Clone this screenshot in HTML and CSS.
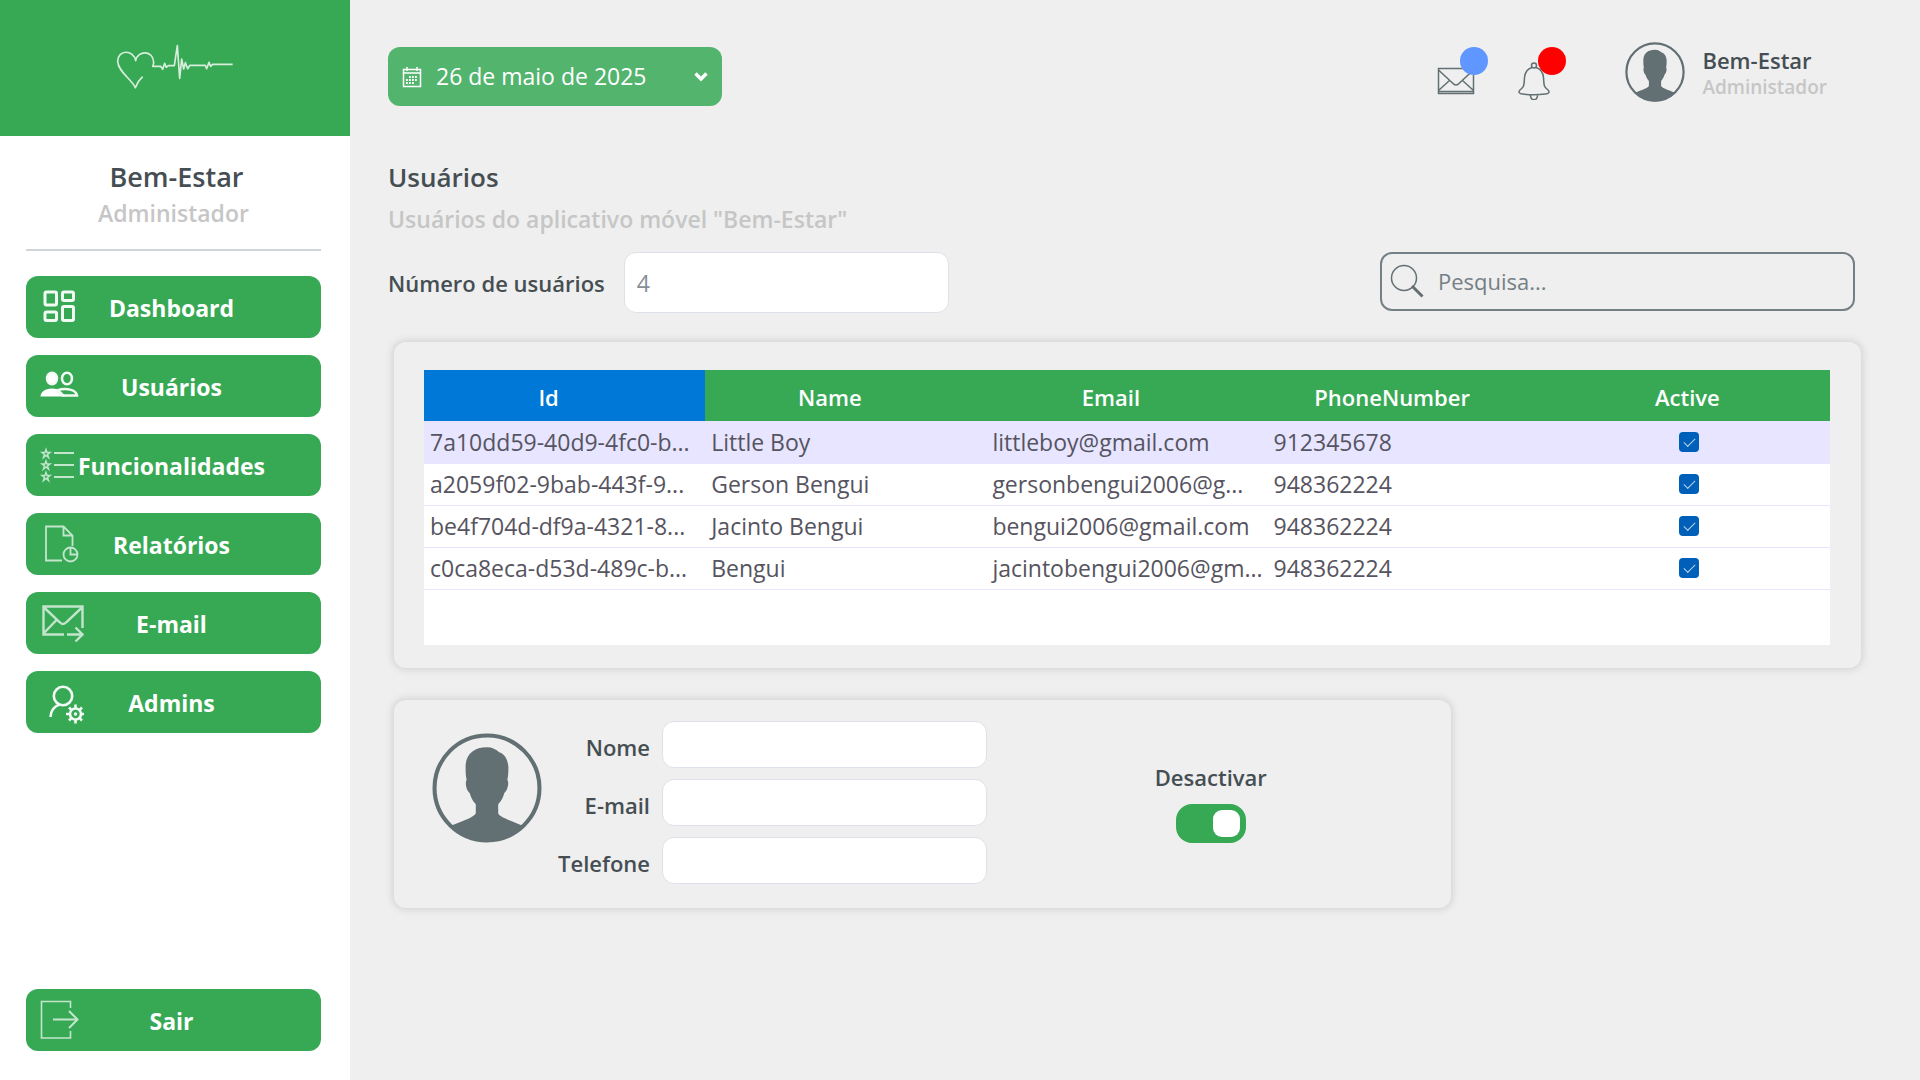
FILE: index.html
```html
<!DOCTYPE html>
<html lang="pt">
<head>
<meta charset="utf-8">
<title>Bem-Estar - Usuários</title>
<link rel="stylesheet" href="styles.css">
</head>
<body>
<svg class="defs" aria-hidden="true">
  <symbol id="person" viewBox="0 0 108 108">
    <clipPath id="person-clip"><circle cx="54" cy="54" r="53"/></clipPath>
    <circle cx="54" cy="54" r="51.500" fill="none" stroke="currentColor" stroke-width="4"/>
    <path clip-path="url(#person-clip)" fill="currentColor" d="M54 14c-13 0-21 7-21 19 0 5 0 9 1 13-2 3 0 11 3 13 1 4 3 8 6 11v9c-3 5-17 8-28 14v17h78V93C82 87 68 84 65 79v-9c3-3 5-7 6-11 3-2 5-10 3-13 1-4 1-8 1-13-1-9-5-13-9-14-3-3-7-5-12-5z"/>
  </symbol>
</svg>
<div class="app">
  <aside class="sidebar">
    <div class="brand">
      <svg class="brand-logo" viewBox="345 125 360 144" aria-label="Bem-Estar" role="img">
        <path d="M428 229c-10 9-17 20-22 33-10-24-53-49-53-79 0-36 48-36 54-2 6-32 54-32 54 6 0 5-2 8-3 11h24l6 9 6-18 5 12 6-5h18l9-60 7 98 6-58 6 30 5-19 7 18 7-10 4 0h42l4 10 7-19 5 12 6-6h60" fill="none" stroke="#d8eedd" stroke-width="5" stroke-linejoin="round"/>
      </svg>
    </div>
    <div class="profile">
      <strong class="profile-name">Bem-Estar</strong>
      <span class="profile-role">Administador</span>
    </div>
    <nav class="menu">
      <button class="menu-item" type="button">
        <svg class="menu-icon" viewBox="0 0 48 48" stroke-width="3"><rect x="9" y="9" width="11.500" height="13" rx="1.500"/><rect x="26.500" y="9" width="11" height="8.500" rx="1.500"/><rect x="9" y="29" width="11.500" height="8.500" rx="1.500"/><rect x="26.500" y="23.500" width="11" height="14" rx="1.500"/></svg>
        <span class="menu-label">Dashboard</span>
      </button>
      <button class="menu-item" type="button">
        <svg class="menu-icon" viewBox="0 0 48 48" stroke-width="2.500"><ellipse cx="16" cy="16.500" rx="5" ry="5.800" fill="#fff"/><ellipse cx="31" cy="16.500" rx="5" ry="5.800"/><path d="M4.500 34.500c0-4 4-8 11.500-8 4 0 7 1 9 3l5 5z" fill="#fff" stroke="none"/><path d="M21 28.500c9-3 19-1 20 5H27c-3-1-4-3-6-5" fill="none"/></svg>
        <span class="menu-label">Usuários</span>
      </button>
      <button class="menu-item" type="button">
        <svg class="menu-icon soft" viewBox="0 0 48 48" stroke-width="1.500"><path d="M10 8.500l1 3h3l-2.500 2 1 3-2.500-2-2.500 2 1-3-2.500-2h3zM10 20l1 3h3l-2.500 2 1 3-2.500-2-2.500 2 1-3-2.500-2h3zM10 31.500l1 3h3l-2.500 2 1 3-2.500-2-2.500 2 1-3-2.500-2h3z"/><path stroke-width="2" d="M18 12h20M18 24h20M18 36h20"/></svg>
        <span class="menu-label">Funcionalidades</span>
      </button>
      <button class="menu-item" type="button">
        <svg class="menu-icon soft" viewBox="0 0 48 48" stroke-width="1.800"><path d="M26 40.500H10V6.500h17.500l9 9V26M27.500 6.500v9h9"/><circle cx="34.500" cy="34.500" r="7"/><path d="M34.500 27.500v7h7"/></svg>
        <span class="menu-label">Relatórios</span>
      </button>
      <button class="menu-item" type="button">
        <svg class="menu-icon soft" viewBox="0 0 48 48" stroke-width="2.400"><path d="M28 35.500H7.500v-28h39V29M7.500 8l16 15q3.500 4 7 0l16-15M7.500 34.500l13-13.500M31 35.500h15M39.500 28.500l7 7-7 7"/></svg>
        <span class="menu-label">E-mail</span>
      </button>
      <button class="menu-item" type="button">
        <svg class="menu-icon" viewBox="0 0 48 48" stroke-width="2.600"><circle cx="27" cy="18" r="9.200"/><path d="M14.500 39c0-6 4-11 9-12.500"/><circle cx="39.500" cy="36" r="5.500"/><circle cx="39.500" cy="36" r="1" stroke-width="1.500"/><path d="M39.500 30.500v-4M39.500 41.500v4M34 36h-4M45 36h3.500M35.600 32.100l-2.600-2.600M43.400 39.900l2.600 2.600M35.600 39.900l-2.600 2.600M43.400 32.100l2.600-2.600"/></svg>
        <span class="menu-label">Admins</span>
      </button>
      <button class="menu-item menu-exit" type="button">
        <svg class="menu-icon soft" viewBox="0 0 48 48" stroke-width="1.600"><path d="M34.500 12V5.500h-29v36.500h29v-7"/><path stroke-width="2" d="M17 23.500h24M33 15l8.500 8.500-8.500 8.500"/></svg>
        <span class="menu-label">Sair</span>
      </button>
    </nav>
  </aside>

  <div class="page">
    <header class="topbar">
      <div class="date">
        <svg class="date-icon" viewBox="0 0 20 22" aria-hidden="true"><path d="M1.500 3.500h17v17h-17zM1.500 7h17M5 1v4M15 1v4" fill="none" stroke="#fff" stroke-width="1.500"/><path d="M7 11h9M4 14h12M4 17h9" stroke="#fff" stroke-width="1.800" stroke-dasharray="1.800 1.200"/></svg>
        <select class="date-select" aria-label="Data"><option>26 de maio de 2025</option></select>
        <svg class="date-arrow" viewBox="0 0 14 10" aria-hidden="true"><path d="M1.500 1.500L7 7l5.500-5.500" fill="none" stroke="#fff" stroke-width="3.400"/></svg>
      </div>
      <div class="status">
        <button class="notice" type="button" aria-label="Mensagens">
          <svg class="notice-icon" viewBox="0 0 38 38"><path d="M1.500 6.500h35v25h-35zM1.500 29.500h35M1.500 8l14 13q3.500 4 7 0l14-13M1.500 28.500l11-10M36.500 28.500l-11-10"/></svg>
          <span class="badge badge-blue"></span>
        </button>
        <button class="notice" type="button" aria-label="Notificações">
          <svg class="notice-icon" viewBox="0 0 38 38"><circle cx="19" cy="3.500" r="2.500"/><path d="M17 5.500c-5 1.500-7 5-7.500 10-.5 7 0 9-4 12-3 2.500-1 4.500 2 4.500 8 1 15 1 23 0 3 0 5-2 2-4.500-4-3-3.500-5-4-12-.5-5-2.500-8.500-7.500-10M15.500 32.500c0 7 7 7 7 0"/></svg>
          <span class="badge badge-red"></span>
        </button>
        <div class="account">
          <svg class="account-photo" aria-hidden="true"><use href="#person"/></svg>
          <div class="account-text">
            <strong class="account-name">Bem-Estar</strong>
            <span class="account-role">Administador</span>
          </div>
        </div>
      </div>
    </header>

    <main class="content">
      <h1 class="title">Usuários</h1>
      <p class="subtitle">Usuários do aplicativo móvel "Bem-Estar"</p>
      <div class="toolbar">
        <label class="label" for="total">Número de usuários</label>
        <input class="field field-tall" id="total" type="text" value="4" readonly>
        <label class="search">
          <svg class="search-icon" viewBox="0 0 34 34" aria-hidden="true"><circle cx="14" cy="14" r="12.500" fill="none" stroke="currentColor" stroke-width="1.500"/><path d="M22 22l10.500 10.500" stroke="currentColor" stroke-width="3"/></svg>
          <input class="search-input" type="search" placeholder="Pesquisa..." aria-label="Pesquisa">
        </label>
      </div>

      <section class="card table-card">
        <div class="table-area">
          <table class="users">
            <thead>
              <tr><th class="sorted">Id</th><th>Name</th><th>Email</th><th>PhoneNumber</th><th class="check">Active</th></tr>
            </thead>
            <tbody>
              <tr class="selected"><td>7a10dd59-40d9-4fc0-b...</td><td>Little Boy</td><td>littleboy@gmail.com</td><td>912345678</td><td class="check"><input class="tick" type="checkbox" checked aria-label="Little Boy"></td></tr>
              <tr><td>a2059f02-9bab-443f-9...</td><td>Gerson Bengui</td><td>gersonbengui2006@g...</td><td>948362224</td><td class="check"><input class="tick" type="checkbox" checked aria-label="Gerson Bengui"></td></tr>
              <tr><td>be4f704d-df9a-4321-8...</td><td>Jacinto Bengui</td><td>bengui2006@gmail.com</td><td>948362224</td><td class="check"><input class="tick" type="checkbox" checked aria-label="Jacinto Bengui"></td></tr>
              <tr><td>c0ca8eca-d53d-489c-b...</td><td>Bengui</td><td>jacintobengui2006@gm...</td><td>948362224</td><td class="check"><input class="tick" type="checkbox" checked aria-label="Bengui"></td></tr>
            </tbody>
          </table>
        </div>
      </section>

      <section class="card detail">
        <svg class="detail-photo" aria-hidden="true"><use href="#person"/></svg>
        <form class="detail-form">
          <label class="label" for="nome">Nome</label><input class="field" id="nome" type="text">
          <label class="label" for="email">E-mail</label><input class="field" id="email" type="email">
          <label class="label" for="telefone">Telefone</label><input class="field" id="telefone" type="tel">
        </form>
        <div class="toggle">
          <label class="label" for="desactivar">Desactivar</label>
          <input class="switch" id="desactivar" type="checkbox" role="switch" checked>
        </div>
      </section>
    </main>
  </div>
</div>
</body>
</html>
```
FILE: styles.css
```css
* { box-sizing: border-box; }

body {
  margin: 0;
  background: #efefef;
  color: #454e52;
  font-family: "Open Sans", "Noto Sans", sans-serif;
  font-size: 23px;
  line-height: 32px;
}

button, input, select { font: inherit; color: inherit; margin: 0; }
button { border: 0; padding: 0; background: none; cursor: pointer; }

.defs { position: absolute; width: 0; height: 0; }

.app {
  display: grid;
  grid-template-columns: 350px minmax(0, 1fr);
  min-height: 100vh;
}

/* Sidebar */
.sidebar {
  display: flex;
  flex-direction: column;
  background: #fff;
}

.brand {
  display: flex;
  justify-content: center;
  padding: 42px 0 46px;
  background: #37a955;
}

.brand-logo { display: block; width: 120px; height: 48px; }

.profile {
  display: flex;
  flex-direction: column;
  align-items: center;
  gap: 4px;
  margin: 0 29px 0 26px;
  padding: 25px 0 20px;
  border-bottom: 2px solid #ced4da;
}

.profile-name { padding-left: 6px; font-size: 27px; font-weight: 600; }
.profile-role { color: #c6c6c6; font-weight: 600; }

.menu {
  flex: 1;
  display: flex;
  flex-direction: column;
  gap: 17px;
  padding: 25px 29px 29px 26px;
}

.menu-item {
  display: grid;
  align-items: center;
  height: 62px;
  padding: 0 10px;
  border-radius: 12px;
  background: #37a955;
  color: #fff;
  font-weight: 700;
}

.menu-icon {
  grid-area: 1 / 1;
  width: 48px;
  height: 48px;
  fill: none;
  stroke: #f2faf4;
}

.menu-icon.soft { stroke: #c3e5cc; }
.menu-label { grid-area: 1 / 1; justify-self: center; padding: 2px 4px 0 0; }
.menu-exit { margin-top: auto; }

/* Top bar */
.topbar {
  display: flex;
  justify-content: space-between;
  padding: 41px 93px 0 38px;
}

.date {
  display: flex;
  align-items: center;
  width: 334px;
  height: 59px;
  margin-top: 6px;
  padding: 0 14px;
  border-radius: 12px;
  background: #53b46e;
  color: #fff;
}

.date-icon { width: 20px; height: 22px; }
.date-arrow { width: 14px; height: 10px; }

.date-select {
  flex: 1;
  min-width: 0;
  appearance: none;
  border: 0;
  padding: 0 14px 2px;
  background: none;
}

.status { display: flex; align-items: flex-start; gap: 40px; }
.notice { position: relative; width: 38px; height: 38px; margin-top: 21px; }
.notice-icon { display: block; width: 38px; height: 38px; fill: none; stroke: #626f73; stroke-width: 1.5; }

.badge {
  position: absolute;
  left: 23px;
  top: -15px;
  width: 28px;
  height: 28px;
  border-radius: 50%;
}

.badge-blue { background: #5f96ff; }
.badge-red { background: #f00; }

.account { display: flex; gap: 17px; margin-left: 32px; color: #626f73; }
.account-photo { width: 60px; height: 60px; margin-top: 1px; }
.account-text { display: flex; flex-direction: column; padding-top: 4px; }
.account-name { color: #454e52; font-size: 22px; font-weight: 600; line-height: 30px; }
.account-role { color: #c6c6c6; font-size: 19px; font-weight: 600; line-height: 24px; }

/* Content */
.content { padding: 53px 59px 40px 38px; }
.title { margin: 0; font-size: 26px; font-weight: 600; line-height: 36px; }
.subtitle { margin: 8px 0 0; color: #c6c6c6; font-weight: 600; }
.label { font-size: 22px; font-weight: 600; }

.toolbar { display: flex; align-items: center; gap: 19px; margin: 17px 6px 29px 0; }

.field {
  width: 325px;
  height: 47px;
  padding: 0 12px;
  border: 1px solid #dde2e8;
  border-radius: 12px;
  background: #fff;
  color: #868e96;
}

.field-tall { height: 61px; }

.search {
  display: flex;
  align-items: center;
  gap: 14px;
  width: 475px;
  height: 59px;
  margin: 0 0 2px auto;
  padding: 0 8px 2px;
  border: 2px solid #748085;
  border-radius: 12px;
  color: #626f73;
}

.search-icon { flex: none; width: 34px; height: 34px; }
.search-input { flex: 1; min-width: 0; border: 0; padding: 0; background: none; outline: 0; font-size: 22px; }
.search-input::placeholder { color: #748085; opacity: 1; }

.card {
  margin-left: 6px;
  border-radius: 12px;
  box-shadow: 0 0 7px 2px #d4d4d4;
}

.table-card { padding: 28px 31px 23px 30px; }
.table-area { min-height: 275px; background: #fff; }

.users { width: 100%; table-layout: fixed; border-collapse: collapse; }

.users th {
  height: 51px;
  padding: 2px 32px 0 0;
  background: #37a955;
  color: #fff;
  font-size: 22px;
  font-weight: 600;
}

.users th.sorted { background: #0078d7; }

.users td {
  height: 42px;
  padding: 0 6px;
  border-bottom: 1px solid #e7e5ff;
  color: #565460;
  white-space: nowrap;
}

.users .selected td { background: #e7e5ff; }
.users .check { padding: 0; text-align: center; }
.users th.check { padding: 2px 4px 0 0; }

.tick {
  display: block;
  width: 20px;
  height: 20px;
  margin: 0 auto;
  appearance: none;
  border-radius: 4px;
  background: #005fb8;
}

.tick:checked::before {
  content: "";
  display: block;
  width: 10px;
  height: 5px;
  margin: 6px 5px;
  border: solid #b8d4ee;
  border-width: 0 0 1px 1px;
  transform: rotate(-45deg);
}

.detail {
  display: flex;
  width: calc(72% - 4px);
  margin-top: 32px;
  padding: 21px 16px 24px 38px;
}

.detail-photo { flex: none; width: 110px; height: 110px; margin-top: 12px; color: #626f73; }

.detail-form {
  display: grid;
  grid-template-columns: 108px 325px;
  gap: 11px 12px;
  align-items: center;
}

.detail-form .label { padding-top: 4px; text-align: right; }

.toggle {
  flex: 1;
  display: flex;
  flex-direction: column;
  align-items: center;
  gap: 11px;
  padding-top: 40px;
}

.switch {
  width: 70px;
  height: 39px;
  padding: 6px;
  appearance: none;
  border-radius: 16px;
  background: #37a955;
}

.switch::before {
  content: "";
  display: block;
  width: 27px;
  height: 27px;
  border-radius: 9px;
  background: #fff;
}

.switch:checked::before { margin-left: auto; }
```
